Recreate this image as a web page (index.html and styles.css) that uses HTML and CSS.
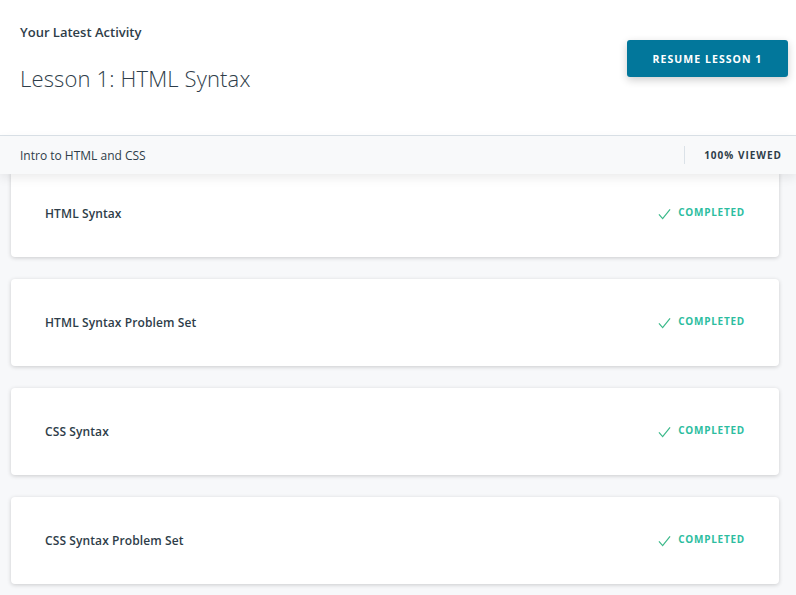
FILE: index.html
```html
<!DOCTYPE html>
<html>
<head>
<meta charset="utf-8">
<link rel="stylesheet" href="styles.css">
</head>
<body>
<header class="top">
  <div class="top-text">
    <div class="eyebrow">Your Latest Activity</div>
    <h1 class="title">Lesson 1: HTML Syntax</h1>
  </div>
  <button class="resume">RESUME LESSON 1</button>
</header>
<div class="subbar">
  <span class="course">Intro to HTML and CSS</span>
  <span class="viewed">100% VIEWED</span>
</div>
<main class="list">
  <div class="card"><span class="name">HTML Syntax</span><span class="status"><svg class="check" viewBox="0 0 14 12" width="13" height="12"><path d="M1 6.5 L5 11 L13 1" fill="none" stroke="#3bb98a" stroke-width="1.3"/></svg>COMPLETED</span></div>
  <div class="card"><span class="name">HTML Syntax Problem Set</span><span class="status"><svg class="check" viewBox="0 0 14 12" width="13" height="12"><path d="M1 6.5 L5 11 L13 1" fill="none" stroke="#3bb98a" stroke-width="1.3"/></svg>COMPLETED</span></div>
  <div class="card"><span class="name">CSS Syntax</span><span class="status"><svg class="check" viewBox="0 0 14 12" width="13" height="12"><path d="M1 6.5 L5 11 L13 1" fill="none" stroke="#3bb98a" stroke-width="1.3"/></svg>COMPLETED</span></div>
  <div class="card"><span class="name">CSS Syntax Problem Set</span><span class="status"><svg class="check" viewBox="0 0 14 12" width="13" height="12"><path d="M1 6.5 L5 11 L13 1" fill="none" stroke="#3bb98a" stroke-width="1.3"/></svg>COMPLETED</span></div>
</main>
</body>
</html>
```
FILE: styles.css
```css
* { box-sizing: border-box; }
html, body { margin: 0; padding: 0; }
body {
  background: #f7f8fa;
  font-family: "Open Sans", "Liberation Sans", sans-serif;
  color: #2e3d49;
  width: 796px;
  height: 595px;
  overflow: hidden;
}
.top {
  background: #fff;
  height: 136px;
  border-bottom: 1px solid #dbe2e8;
  display: flex;
  justify-content: space-between;
  align-items: flex-start;
  padding: 22px 8px 0 20px;
}
.eyebrow {
  font-size: 13px;
  font-weight: 600;
  line-height: 20px;
  color: #2e3d49;
}
.title {
  margin: 21px 0 0 0;
  font-size: 22px;
  font-weight: 300;
  line-height: 30px;
  letter-spacing: 0.15px;
  color: #2e3d49;
}
.resume {
  margin-top: 18px;
  width: 161px;
  height: 37px;
  border: none;
  border-radius: 3px;
  background: #02779b;
  color: #fff;
  font-family: inherit;
  font-size: 10.5px;
  font-weight: 700;
  letter-spacing: 1.05px;
  box-shadow: 0 3px 8px rgba(0,0,0,0.2);
}
.subbar {
  position: relative;
  z-index: 2;
  height: 38px;
  background: #f8f9fa;
  display: flex;
  align-items: center;
  justify-content: space-between;
  padding: 0 14px 0 20px;
  box-shadow: 0 4px 10px rgba(0,0,0,0.08);
  margin-bottom: -4px;
}
.course { font-size: 12px; color: #2e3d49; }
.viewed {
  font-size: 10px;
  font-weight: 700;
  letter-spacing: 1px;
  color: #2e3d49;
  border-left: 1px solid #dbe2e8;
  padding-left: 19px;
  line-height: 18px;
}
.list {
  padding: 0 17px 0 11px;
  display: flex;
  flex-direction: column;
  gap: 22px;
}
.card {
  background: #fff;
  height: 87px;
  border-radius: 4px;
  box-shadow: 0 1px 4px rgba(0,0,0,0.18);
  display: flex;
  align-items: center;
  justify-content: space-between;
  padding: 0 34px 0 34px;
}
.name { font-size: 12px; font-weight: 600; color: #2e3d49; letter-spacing: 0.1px; }
.status {
  display: flex;
  align-items: center;
  gap: 7px;
  font-size: 10px;
  font-weight: 700;
  letter-spacing: 0.75px;
  color: #2dbd9f;
  margin-top: -3px;
}
.check { margin-top: 3px; }
```
